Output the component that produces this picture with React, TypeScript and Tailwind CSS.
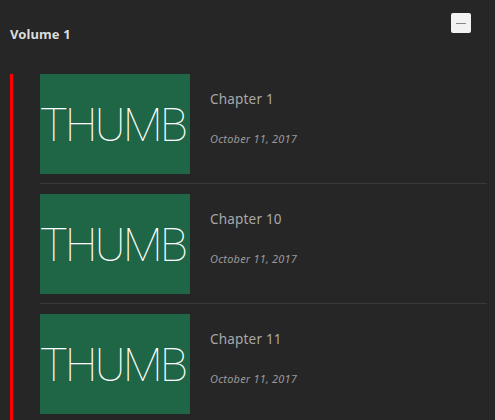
import React from "react";

const chapters = [
  { title: "Chapter 1", date: "October 11, 2017" },
  { title: "Chapter 10", date: "October 11, 2017" },
  { title: "Chapter 11", date: "October 11, 2017" },
];

export default function App() {
  return (
    <div className="w-[495px] h-[420px] overflow-hidden bg-[#262626]" style={{ fontFamily: "'Noto Sans', sans-serif" }}>
      <div className="flex items-start justify-between pl-[10px] pr-[24px] pt-[13px]">
        <div className="pt-[12px] text-[13px] font-bold text-[#dcdcdc] tracking-[0.1px]">Volume 1</div>
        <button className="w-[20px] h-[20px] bg-[#f2f2f2] rounded-[2px] flex items-center justify-center">
          <span className="block w-[10px] h-px bg-[#888]"></span>
        </button>
      </div>
      <div className="ml-[10px] mr-[8px] mt-[29px] border-l-[3px] border-[#ff0000] pl-[27px]">
        {chapters.map((c, i) => (
          <div key={i} className={i > 0 ? "border-t border-[#3a3a3a] pt-[10px] pb-[9px]" : "pb-[9px]"}>
            <div className="flex">
              <div className="w-[150px] h-[100px] bg-[#1f6647] flex items-center justify-start shrink-0 overflow-hidden">
                <span className="text-white text-[46px] font-thin leading-none tracking-[-2.5px] pt-[3px] whitespace-nowrap" style={{ fontFamily: "Roboto, sans-serif" }}>THUMB</span>
              </div>
              <div className="pl-[20px] pt-[16px]">
                <div className="text-[13.5px] text-[#a8a8a8] leading-[18px] tracking-[0.2px]">{c.title}</div>
                <div className="mt-[24px] text-[11px] italic text-[#9a9a9a] leading-[14px] tracking-[0.2px]">{c.date}</div>
              </div>
            </div>
          </div>
        ))}
      </div>
    </div>
  );
}
